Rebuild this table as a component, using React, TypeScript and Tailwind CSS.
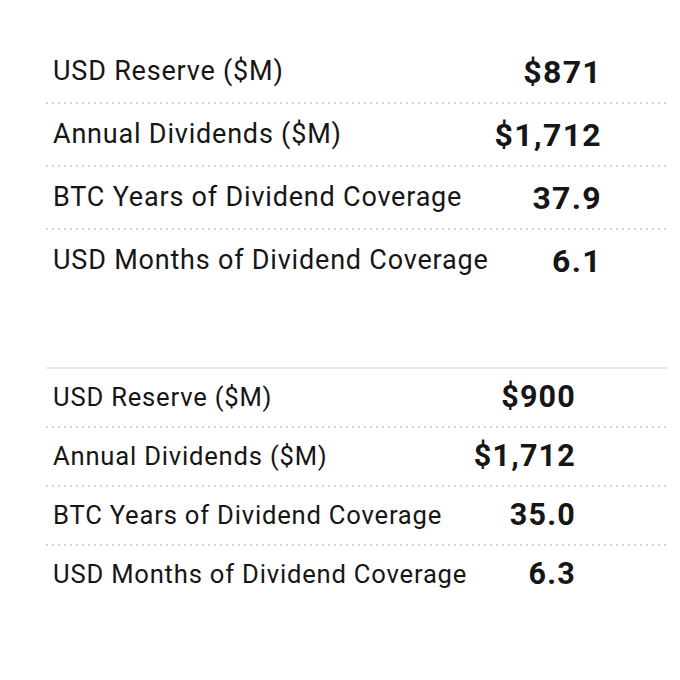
import React from "react";

type Row = { label: string; value: string };

const top: Row[] = [
  { label: "USD Reserve ($M)", value: "$871" },
  { label: "Annual Dividends ($M)", value: "$1,712" },
  { label: "BTC Years of Dividend Coverage", value: "37.9" },
  { label: "USD Months of Dividend Coverage", value: "6.1" },
];

const bottom: Row[] = [
  { label: "USD Reserve ($M)", value: "$900" },
  { label: "Annual Dividends ($M)", value: "$1,712" },
  { label: "BTC Years of Dividend Coverage", value: "35.0" },
  { label: "USD Months of Dividend Coverage", value: "6.3" },
];

function Dots() {
  return (
    <div className="h-[2px] w-full bg-[linear-gradient(to_right,#d4d4d4_2px,transparent_2px)] bg-[length:6px_2px] bg-repeat-x" />
  );
}

export default function App() {
  return (
    <div
      className="w-[680px] h-[680px] bg-white text-[#161616]"
      style={{ fontFamily: "Roboto, 'Liberation Sans', sans-serif" }}
    >
      <div className="pl-[46px] pt-[41px] w-[668px]">
        <div className="flex flex-col">
          {top.map((r, i) => (
            <div key={r.label}>
              <div className="flex h-[61px] items-center justify-between pl-[7px] pr-[66px]">
                <span className="text-[27px] leading-none tracking-[0.8px]">{r.label}</span>
                <span className="text-[32px] font-bold leading-none tracking-[1.3px]">{r.value}</span>
              </div>
              {i < top.length - 1 && <Dots />}
            </div>
          ))}
        </div>
        <div className="mt-[76px] border-t-2 border-[#ebebeb]">
          {bottom.map((r, i) => (
            <div key={r.label}>
              <div className="flex h-[57px] items-center justify-between pl-[7px] pr-[92px]">
                <span className="text-[25.6px] leading-none tracking-[0.8px]">{r.label}</span>
                <span className="text-[30.5px] font-bold leading-none tracking-[1.2px]">{r.value}</span>
              </div>
              {i < bottom.length - 1 && <Dots />}
            </div>
          ))}
        </div>
      </div>
    </div>
  );
}
